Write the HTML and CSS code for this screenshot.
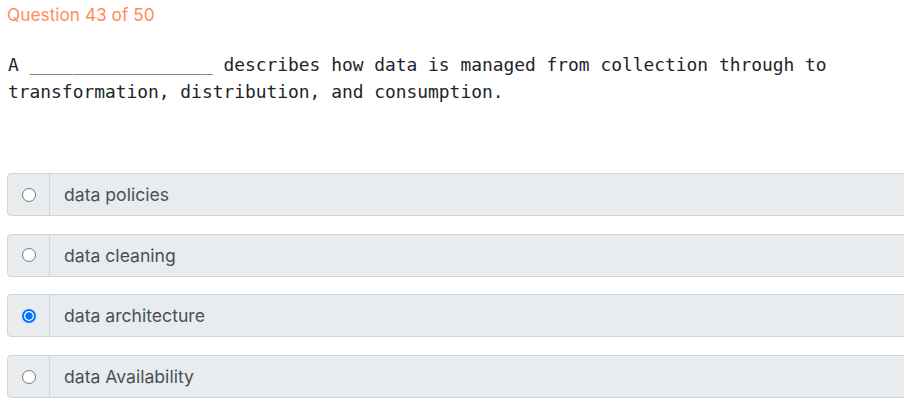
FILE: index.html
```html
<!DOCTYPE html>
<html>
<head>
<meta charset="utf-8">
<link rel="stylesheet" href="styles.css">
</head>
<body>
<div class="page">
  <div class="counter">Question 43 of 50</div>
  <div class="question">A _________________ describes how data is managed from collection through to transformation, distribution, and consumption.</div>
  <div class="options">
    <label class="option">
      <span class="radio-cell"><span class="radio"></span></span>
      <span class="label">data policies</span>
    </label>
    <label class="option">
      <span class="radio-cell"><span class="radio"></span></span>
      <span class="label">data cleaning</span>
    </label>
    <label class="option">
      <span class="radio-cell"><span class="radio checked"></span></span>
      <span class="label">data architecture</span>
    </label>
    <label class="option">
      <span class="radio-cell"><span class="radio"></span></span>
      <span class="label">data Availability</span>
    </label>
  </div>
</div>
</body>
</html>
```

FILE: styles.css
```css
html, body {
  margin: 0;
  padding: 0;
  background: #ffffff;
  overflow: hidden;
}
.page {
  padding: 3px 0 0 7px;
  width: 1000px;
}
.counter {
  font-family: "Inter", "Noto Sans", sans-serif;
  font-size: 17.3px;
  color: #ff8c5a;
  line-height: 24px;
}
.question {
  margin-top: 24px;
  padding-left: 1px;
  width: 830px;
  font-family: "DejaVu Sans Mono", monospace;
  font-size: 17.9px;
  line-height: 27px;
  color: #212529;
}
.options {
  margin-top: 68px;
  display: flex;
  flex-direction: column;
  gap: 17.7px;
}
.option {
  display: flex;
  height: 43px;
  box-sizing: border-box;
  border: 1px solid #ced4da;
  border-radius: 4px;
  background: #e9ecef;
  font-family: "Inter", "Noto Sans", sans-serif;
  font-size: 17.6px;
  color: #495057;
}
.radio-cell {
  width: 41px;
  display: flex;
  align-items: center;
  justify-content: center;
  border-right: 1px solid #ced4da;
}
.radio {
  width: 14px;
  height: 14px;
  box-sizing: border-box;
  border-radius: 50%;
  border: 1px solid #767676;
  background: #ffffff;
}
.radio.checked {
  border: 2px solid #0075ff;
  background: radial-gradient(circle, #0075ff 0 3.4px, #ffffff 4px);
}
.label {
  display: flex;
  align-items: center;
  padding-left: 14px;
}
```
